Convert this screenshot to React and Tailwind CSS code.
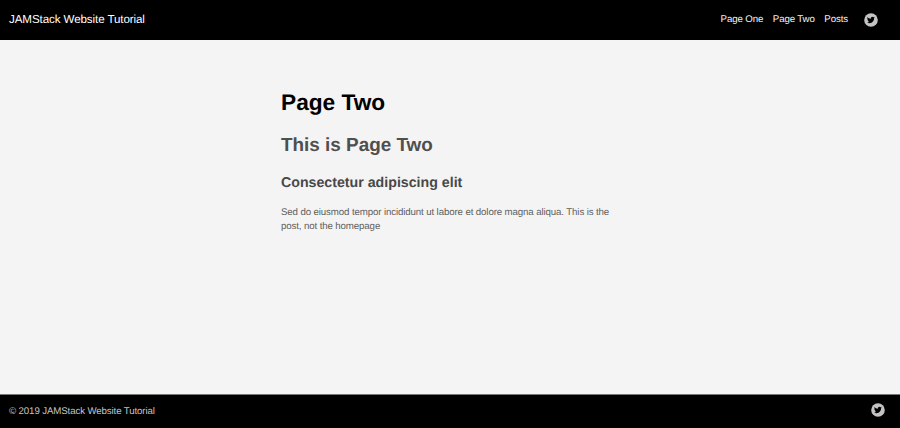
import React from 'react';

const TwitterBadge = () => (
  <svg viewBox="0 0 28 28" className="block w-[14px] h-[14px]" aria-label="Twitter">
    <circle cx="14" cy="14" r="13.6" fill="#c4c4c4" />
    <path
      transform="translate(5.9 6) scale(0.66)"
      fill="#000"
      d="M23.95 4.57a10 10 0 0 1-2.82.77 4.96 4.96 0 0 0 2.16-2.72c-.95.55-2 .95-3.13 1.18a4.92 4.92 0 0 0-8.38 4.48C7.69 8.1 4.07 6.13 1.64 3.16a4.92 4.92 0 0 0 1.52 6.57 4.9 4.9 0 0 1-2.23-.61v.06c0 2.38 1.7 4.37 3.95 4.83a5 5 0 0 1-2.21.08 4.94 4.94 0 0 0 4.6 3.42A9.87 9.87 0 0 1 0 19.54a14 14 0 0 0 7.55 2.21c9.05 0 14-7.5 14-13.98 0-.21 0-.42-.02-.63a9.94 9.94 0 0 0 2.46-2.55z"
    />
  </svg>
);

const links = ['Page One', 'Page Two', 'Posts'];

const Header = () => (
  <header className="flex h-10 items-center justify-between bg-black pl-[9px] pr-[22px]">
    <a href="#" className="text-[11.6px] leading-4 tracking-[-0.1px] text-white">
      JAMStack Website Tutorial
    </a>
    <div className="flex items-center pb-px">
      <nav className="flex gap-[9.6px]">
        {links.map((link) => (
          <a
            key={link}
            href="#"
            className="text-[9.7px] leading-[14px] tracking-[-0.12px] text-[#f4f4f4]"
          >
            {link}
          </a>
        ))}
      </nav>
      <a href="#" className="ml-[16px]">
        <TwitterBadge />
      </a>
    </div>
  </header>
);

const Footer = () => (
  <footer className="flex h-[34px] justify-between border-t border-[#777777] bg-black pl-[9px] pr-[15px] pt-[8px]">
    <p className="pt-[2px] text-[9.7px] leading-[14px] tracking-[-0.12px] text-[#c4c4c4]">
      © 2019 JAMStack Website Tutorial
    </p>
    <a href="#">
      <TwitterBadge />
    </a>
  </footer>
);

const App = () => {
  return (
    <div className="flex h-screen flex-col overflow-hidden bg-[#f4f4f4] font-['Liberation_Sans',Arial,sans-serif] [text-rendering:geometricPrecision]">
      <Header />
      <main className="mx-auto w-[338px] flex-1 pt-[48px]">
        <h1 className="text-[22.7px] font-bold leading-[28px] text-black">Page Two</h1>
        <h2 className="mt-[18px] text-[18.9px] font-bold leading-[24px] text-[#4f4f4f]">
          This is Page Two
        </h2>
        <h3 className="mt-[15px] text-[14.2px] font-bold leading-[20px] text-[#484848]">
          Consectetur adipiscing elit
        </h3>
        <p className="mt-[13px] text-[9.7px] leading-[14.25px] tracking-[-0.12px] text-[#606060]">
          Sed do eiusmod tempor incididunt ut labore et dolore magna aliqua. This is the post, not
          the homepage
        </p>
      </main>
      <Footer />
    </div>
  );
};

export default App;
